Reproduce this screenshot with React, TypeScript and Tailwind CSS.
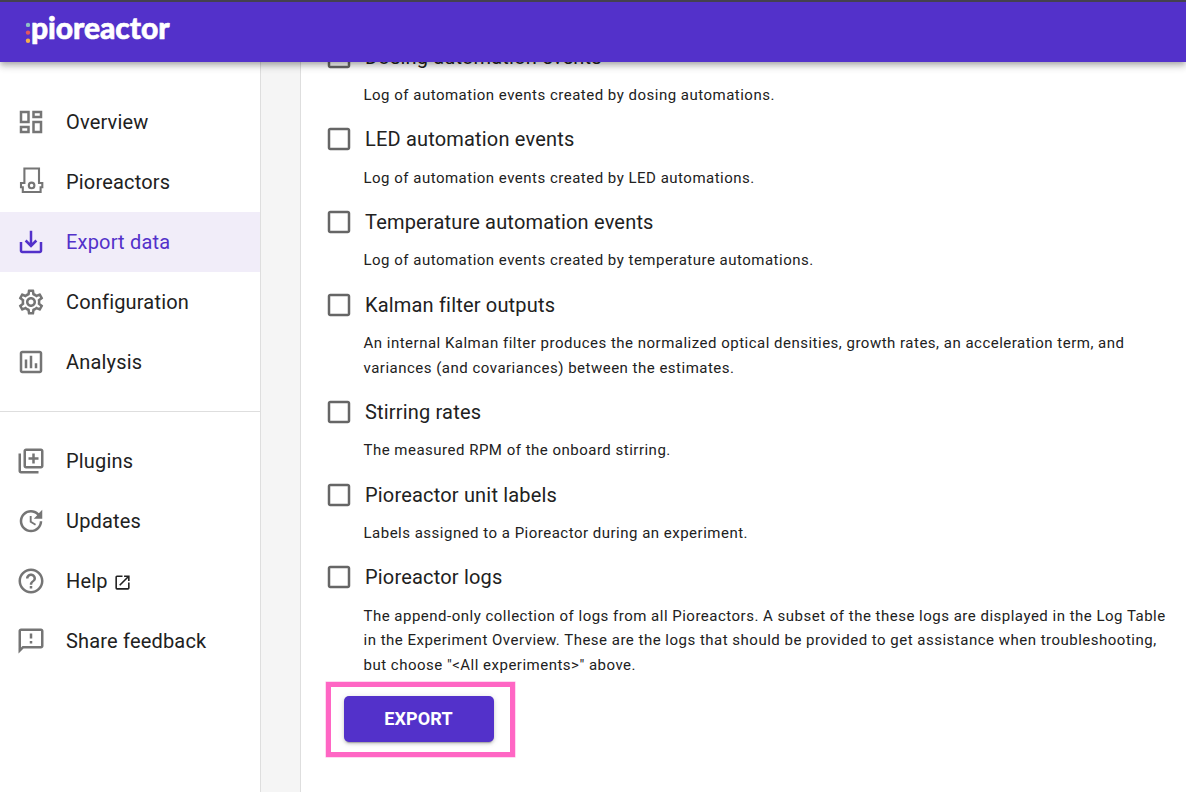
import type { ReactNode } from "react";
import {
  MdHelpOutline,
  MdOutlineDashboard,
  MdOutlineFeedback,
  MdOutlineInsertChart,
  MdOutlineLibraryAdd,
  MdOutlineOpenInNew,
  MdOutlineSettings,
  MdSaveAlt,
  MdUpdate,
} from "react-icons/md";

function PioreactorIcon() {
  return (
    <svg width="30" height="30" viewBox="0 0 30 30" fill="none" stroke="currentColor" strokeWidth="2.1">
      <path d="M8.4 16V1.5H23V16H26.3V20.2H24.6V25H6.8V20.2H5V16H8.4Z" />
      <circle cx="15.6" cy="18.4" r="2.8" />
    </svg>
  );
}

function Logo() {
  return (
    <div className="ml-[25px] mt-[-10px] flex items-center">
      <svg width="6" height="24" viewBox="0 0 6 24" className="mt-[12px]">
        <circle cx="3" cy="3.9" r="2.2" fill="#8fc1c5" />
        <circle cx="3" cy="11.6" r="2.2" fill="#e2585e" />
        <circle cx="3" cy="19.8" r="2.2" fill="#f5b04c" />
      </svg>
      <span className="font-[Lato,sans-serif] text-[30px] font-black leading-[34px] tracking-[-0.05px] text-white [-webkit-text-stroke:0.6px_white]">
        pioreactor
      </span>
    </div>
  );
}

type NavItem = { label: string; icon: ReactNode; active?: boolean; external?: boolean };

const primary: NavItem[] = [
  { label: "Overview", icon: <MdOutlineDashboard size={30} /> },
  { label: "Pioreactors", icon: <PioreactorIcon /> },
  { label: "Export data", icon: <MdSaveAlt size={30} />, active: true },
  { label: "Configuration", icon: <MdOutlineSettings size={30} /> },
  { label: "Analysis", icon: <MdOutlineInsertChart size={30} /> },
];

const secondary: NavItem[] = [
  { label: "Plugins", icon: <MdOutlineLibraryAdd size={30} /> },
  { label: "Updates", icon: <MdUpdate size={30} /> },
  { label: "Help", icon: <MdHelpOutline size={30} />, external: true },
  { label: "Share feedback", icon: <MdOutlineFeedback size={30} /> },
];

function NavList({ items }: { items: NavItem[] }) {
  return (
    <ul>
      {items.map((item) => (
        <li
          key={item.label}
          className={
            item.active
              ? "flex h-[60px] items-center bg-[#f1edf9] pl-4 text-[#5331ca]"
              : "flex h-[60px] items-center pl-4 text-[#212121]"
          }
        >
          <span className={item.active ? "w-[50px] text-[#5331ca]" : "w-[50px] text-[#757575]"}>{item.icon}</span>
          <span className="flex items-center text-[20px] leading-[30px] tracking-[0.18px]">
            {item.label}
            {item.external && <MdOutlineOpenInNew size={19} className="ml-[5px] mt-[2px]" />}
          </span>
        </li>
      ))}
    </ul>
  );
}

const datasets: { title: string; lines: string[] }[] = [
  { title: "Dosing automation events", lines: ["Log of automation events created by dosing automations."] },
  { title: "LED automation events", lines: ["Log of automation events created by LED automations."] },
  { title: "Temperature automation events", lines: ["Log of automation events created by temperature automations."] },
  {
    title: "Kalman filter outputs",
    lines: [
      "An internal Kalman filter produces the normalized optical densities, growth rates, an acceleration term, and",
      "variances (and covariances) between the estimates.",
    ],
  },
  { title: "Stirring rates", lines: ["The measured RPM of the onboard stirring."] },
  { title: "Pioreactor unit labels", lines: ["Labels assigned to a Pioreactor during an experiment."] },
  {
    title: "Pioreactor logs",
    lines: [
      "The append-only collection of logs from all Pioreactors. A subset of the these logs are displayed in the Log Table",
      "in the Experiment Overview. These are the logs that should be provided to get assistance when troubleshooting,",
      'but choose "<All experiments>" above.',
    ],
  },
];

export default function App() {
  return (
    <div className="flex h-[792px] w-[1186px] flex-col overflow-hidden bg-[#f5f5f5] font-[Roboto,sans-serif] text-[#212121]">
      <header className="z-10 flex h-[62px] shrink-0 items-center border-t-2 border-[#44414f] bg-[#5331ca] shadow-[0_2px_5px_-1px_rgba(0,0,0,0.2),0_5px_6px_0_rgba(0,0,0,0.14),0_1px_12px_0_rgba(0,0,0,0.12)]">
        <Logo />
      </header>
      <div className="flex min-h-0 flex-1">
        <nav className="w-[261px] shrink-0 border-r border-[#dedede] bg-white pt-[30px]">
          <NavList items={primary} />
          <hr className="mb-[19px] mt-[19px] border-[#dedede]" />
          <NavList items={secondary} />
        </nav>
        <main className="ml-[39px] flex-1 overflow-hidden border-l border-[#dedede] bg-white pl-[23px]">
          <div className="-mt-[31.45px]">
            {datasets.map((d) => (
              <section key={d.title} className="mb-[5.2px]">
                <label className="flex h-[52.5px] items-center">
                  <svg width="30" height="30" viewBox="0 0 24 24" className="text-[#666666]">
                    <path
                      fill="currentColor"
                      d="M19 5v14H5V5h14m0-2H5c-1.1 0-2 .9-2 2v14c0 1.1.9 2 2 2h14c1.1 0 2-.9 2-2V5c0-1.1-.9-2-2-2z"
                    />
                  </svg>
                  <span className="ml-[11px] text-[20px] leading-[30px] tracking-[0.18px]">{d.title}</span>
                </label>
                <p className="ml-[39.5px] whitespace-nowrap text-[15px] leading-[24.9px] tracking-[0.495px]">
                  {d.lines.map((line) => (
                    <span key={line} className="block">
                      {line}
                    </span>
                  ))}
                </p>
              </section>
            ))}
          </div>
          <div className="ml-[2px] mt-[-1.55px] h-[75px] w-[189px] border-5 border-[#ff66c4] pl-[13px] pt-[9px] shadow-[0_0_0_0.5px_#ffb3e2]">
            <button className="h-[46px] w-[150px] rounded-[5px] bg-[#5331ca] pr-[1px] text-[18px] font-bold leading-[30px] tracking-[0.1px] text-white shadow-[0_3px_1px_-2px_rgba(0,0,0,0.2),0_2px_3px_0_rgba(0,0,0,0.14),0_1px_6px_0_rgba(0,0,0,0.12)]">
              EXPORT
            </button>
          </div>
        </main>
      </div>
    </div>
  );
}
